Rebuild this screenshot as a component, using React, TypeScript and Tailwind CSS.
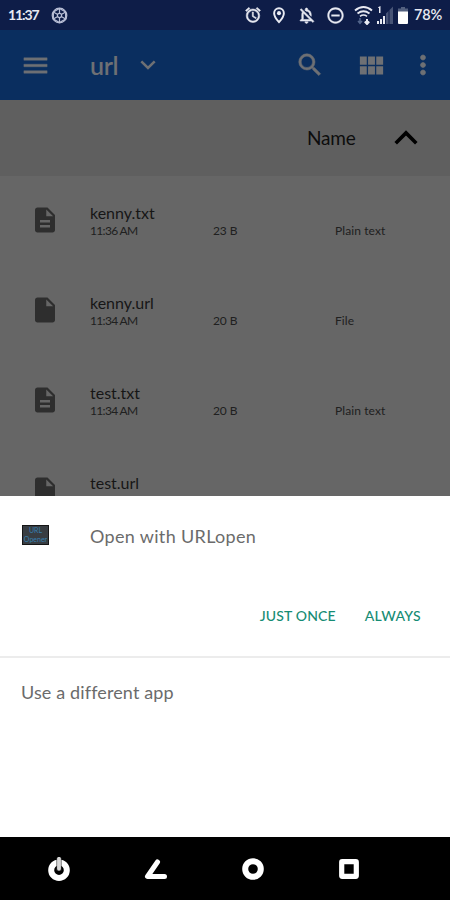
import {
  MdAlarm,
  MdInsertDriveFile,
  MdDescription,
  MdMenu,
  MdMoreVert,
  MdOutlineDoNotDisturbOn,
  MdOutlineNotificationsOff,
  MdSearch,
  MdViewModule,
} from "react-icons/md";

const files = [
  { name: "kenny.txt", time: "11:36 AM", size: "23 B", type: "Plain text" },
  { name: "kenny.url", time: "11:34 AM", size: "20 B", type: "File" },
  { name: "test.txt", time: "11:34 AM", size: "20 B", type: "Plain text" },
];

const StatusBar = () => (
  <div className="flex h-[30px] items-center bg-[#0e1d48] pl-2 text-[#e8eaf2]">
    <span className="w-[30px] text-[14px] leading-none font-bold tracking-[-1.1px]">11:37</span>
    <svg className="ml-[13px] h-[17px] w-[17px]" viewBox="0 0 18 18" fill="none" stroke="#b9bfd6" strokeWidth="1.3">
      <path d="M9 1.500 15.500 5.200v7.600L9 16.500 2.500 12.800V5.200z" />
      <circle cx="9" cy="9" r="2.200" />
      <circle cx="9" cy="9" r="7.700" />
      <path d="M9 1.500v5.300M9 11.200v5.300M2.500 5.200l4.600 2.700M10.900 10.100l4.600 2.700M15.500 5.200l-4.600 2.700M7.100 10.100l-4.600 2.700" />
    </svg>
    <MdAlarm className="ml-[176px] h-[18px] w-[18px] stroke-current stroke-[0.7] [&>path[fill=none]]:stroke-none" />
    <svg className="ml-[8px] h-[18px] w-[18px]" viewBox="0 0 24 24" fill="none" stroke="currentColor" strokeWidth="2.600">
      <path d="M12 21.500C8 17 5.500 13 5.500 9.500a6.500 6.500 0 0 1 13 0c0 3.500-2.500 7.500-6.500 12z" />
      <circle cx="12" cy="9.500" r="2.700" fill="currentColor" stroke="none" />
    </svg>
    <MdOutlineNotificationsOff className="ml-[9px] h-[19px] w-[19px] stroke-current stroke-[0.7] [&>path[fill=none]]:stroke-none" />
    <MdOutlineDoNotDisturbOn className="ml-[10px] h-[19px] w-[19px] stroke-current stroke-[0.5] [&>path[fill=none]]:stroke-none" />
    <svg className="ml-[9px] h-5 w-[19px]" viewBox="0 0 19 20" fill="none" stroke="currentColor">
      <path d="M1 5.500q8.500-7 17 0" strokeWidth="2" />
      <path d="M3.500 8.500q6-4.500 12 0" strokeWidth="1.800" />
      <path d="M6 11.300q3.500-2.600 7 0" strokeWidth="1.600" />
      <path d="M6 13v5M4 16l2 2.300L8 16" stroke="#53658b" strokeWidth="1.500" />
      <path d="M13 19v-5M10.800 16.500 13 19l2.200-2.500" strokeWidth="2" />
    </svg>
    <svg className="ml-[4px] h-[18px] w-4" viewBox="0 0 16 18" fill="currentColor">
      <path d="M9 7.500 11.500 5v13H9zM12.500 4 16 .5V18h-3.500z" fill="#475476" />
      <path d="M0 15h2v3H0zM3 13h2v5H3zM6 10h2v8H6zM1.500 1 3.500 0v7H2V2H1z" />
    </svg>
    <svg className="ml-[5px] h-[17px] w-[10px]" viewBox="0 0 10 17">
      <path d="M3 0h4v1.500h3V5H0V1.500h3z" fill="#53607f" />
      <path d="M0 4.500h10V16q0 1-1 1H1q-1 0-1-1z" fill="#fff" />
    </svg>
    <span className="ml-[6px] text-[14.500px] leading-none font-semibold tracking-[-0.2px]">78%</span>
  </div>
);

const Toolbar = () => (
  <div className="flex h-[70px] items-center bg-[#0a2e5f] pl-5 text-[#6e7074]">
    <MdMenu className="h-[31px] w-[31px] stroke-current stroke-[0.3] [&>path[fill=none]]:stroke-none" />
    <span className="ml-[39px] w-7 text-[25px] leading-none font-semibold tracking-[-0.4px]">url</span>
    <svg className="ml-[22px] h-[10px] w-4" viewBox="0 0 16 10" fill="none" stroke="currentColor" strokeWidth="2.500">
      <path d="M1.300 1.300 8 8l6.700-6.700" />
    </svg>
    <MdSearch className="ml-[139px] h-[30px] w-[30px] stroke-current stroke-[0.4] [&>path[fill=none]]:stroke-none" />
    <MdViewModule className="ml-[31px] h-[31px] w-[31px]" />
    <MdMoreVert className="ml-[21px] h-[30px] w-[30px] stroke-current stroke-[0.5] [&>path[fill=none]]:stroke-none" />
  </div>
);

const SortHeader = () => (
  <div className="flex h-[76px] items-center justify-end bg-[#5f5f5f] pr-8 pb-0.5 text-[#0d0d0d]">
    <span className="w-[49px] text-[19px] leading-none tracking-[-0.2px]">Name</span>
    <svg className="ml-[38px] h-[15px] w-6" viewBox="0 0 24 15" fill="none" stroke="#000" strokeWidth="3.600">
      <path d="M1.700 13.200 12 2.900l10.300 10.300" />
    </svg>
  </div>
);

const FileList = () => (
  <div className="h-[320px] overflow-hidden bg-[#666666] text-[#161616]">
    {files.map((file) => (
      <div key={file.name} className="flex h-[90px] items-center pl-[30px]">
        {file.type === "File" ? (
          <MdInsertDriveFile className="mb-0.5 h-[30px] w-[30px] text-[#2e2e2e]" />
        ) : (
          <MdDescription className="mb-0.5 h-[30px] w-[30px] text-[#2e2e2e]" />
        )}
        <div className="ml-[30px] flex flex-col pt-0.5">
          <span className="text-[16px] leading-[18px]">{file.name}</span>
          <div className="flex text-[12px] leading-[18px] text-[#202020]">
            <span className="w-[123px] tracking-[-0.65px]">{file.time}</span>
            <span className="w-[122px] tracking-[-0.1px]">{file.size}</span>
            <span className="tracking-[0.1px]">{file.type}</span>
          </div>
        </div>
      </div>
    ))}
    {/* last row slides under the sheet, only its name shows */}
    <div className="flex h-[50px] items-start pl-[30px]">
      <MdInsertDriveFile className="mt-[29px] h-[30px] w-[30px] text-[#2e2e2e]" />
      <span className="mt-[28px] ml-[30px] text-[16px] leading-[18px]">test.url</span>
    </div>
  </div>
);

const OpenSheet = () => (
  <div className="flex h-[341px] flex-col bg-white text-[#6b6b6b]">
    <div className="flex h-[80px] items-center pb-[3px] pl-[22px]">
      <div className="flex h-5 w-[27px] flex-col items-center justify-center border border-[#151515] bg-[#383d42] text-[7px] leading-[9px] text-[#377fae]">
        <span>URL</span>
        <span>Opener</span>
      </div>
      <span className="ml-[41px] pt-0.5 text-[18px] leading-none tracking-[0.33px]">Open with URLopen</span>
    </div>
    <div className="flex h-[79px] items-center justify-end pr-[29px] text-[14px] font-medium text-[#168c74]">
      <button className="tracking-[0.15px]">JUST ONCE</button>
      <button className="ml-[29px] tracking-[0.3px]">ALWAYS</button>
    </div>
    <div className="mt-px h-[2px] bg-[#ececec]" />
    <div className="flex h-[67px] items-center pl-[21px]">
      <span className="text-[18px] leading-none tracking-[0.13px]">Use a different app</span>
    </div>
  </div>
);

const NavBar = () => (
  <div className="flex h-[63px] items-center bg-black pl-12 text-white">
    <svg className="h-6 w-[22px]" viewBox="0 0 22 24" fill="none">
      <circle cx="11" cy="13.200" r="7.800" stroke="#fff" strokeWidth="6" />
      <path d="M11 1v12.500" stroke="#333" strokeWidth="5" />
      <path d="M11 1.800v10" stroke="#d8d8d8" strokeWidth="3.800" strokeLinecap="round" />
    </svg>
    <svg className="ml-[74px] h-[22px] w-6" viewBox="0 0 24 22" fill="none" stroke="#fff" strokeWidth="5" strokeLinecap="round" strokeLinejoin="round">
      <path d="M13.500 4 3.500 18.500h17" />
    </svg>
    <svg className="ml-[74px] h-[22px] w-[22px]" viewBox="0 0 22 22" fill="none">
      <circle cx="11" cy="11" r="7.800" stroke="#fff" strokeWidth="6" />
    </svg>
    <svg className="ml-[75px] h-5 w-5" viewBox="0 0 20 20" fill="none">
      <rect x="2.700" y="2.700" width="14.600" height="14.600" rx="0.500" stroke="#fff" strokeWidth="5.200" strokeLinejoin="round" />
    </svg>
  </div>
);

const App = () => {
  return (
    <div className="flex h-[900px] w-[450px] flex-col overflow-hidden bg-black font-['Lato','Open_Sans',sans-serif]">
      <StatusBar />
      <Toolbar />
      <SortHeader />
      <FileList />
      <OpenSheet />
      <NavBar />
    </div>
  );
};

export default App;
